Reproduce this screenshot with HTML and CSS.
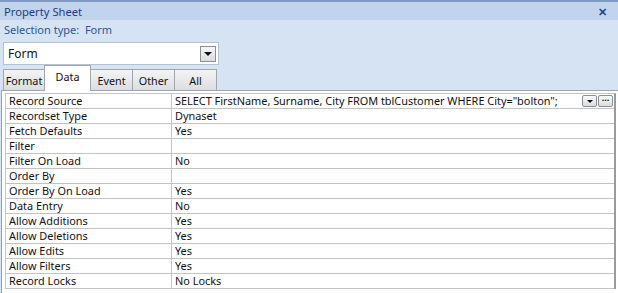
FILE: index.html
```html
<!DOCTYPE html>
<html lang="en">
<head>
    <meta charset="UTF-8">
    <title>Property Sheet</title>
    <link rel="stylesheet" href="styles.css">
</head>
<body>
    <div class="sheet">
        <div class="titlebar">
            <span class="title">Property Sheet</span>
            <span class="close">&#x2715;</span>
        </div>
        <div class="selection">Selection type:&nbsp; Form</div>

        <div class="combo">
            <span class="combo-text">Form</span>
            <span class="combo-btn"><span class="arrow"></span></span>
        </div>

        <!-- tabs -->
        <div class="tabs">
            <div class="tab format">Format</div>
            <div class="tab active">Data</div>
            <div class="tab">Event</div>
            <div class="tab">Other</div>
            <div class="tab">All</div>
        </div>

        <div class="pane">
            <div class="grid">
                <div class="name">Record Source</div>
                <div class="value source">
                    <span>SELECT FirstName, Surname, City FROM tblCustomer WHERE City="bolton";</span>
                    <span class="btns">
                        <span class="mini"><span class="arrow small"></span></span>
                        <span class="mini dots">&middot;&middot;&middot;</span>
                    </span>
                </div>
                <div class="name">Recordset Type</div><div class="value">Dynaset</div>
                <div class="name">Fetch Defaults</div><div class="value">Yes</div>
                <div class="name">Filter</div><div class="value"></div>
                <div class="name">Filter On Load</div><div class="value">No</div>
                <div class="name">Order By</div><div class="value"></div>
                <div class="name">Order By On Load</div><div class="value">Yes</div>
                <div class="name">Data Entry</div><div class="value">No</div>
                <div class="name">Allow Additions</div><div class="value">Yes</div>
                <div class="name">Allow Deletions</div><div class="value">Yes</div>
                <div class="name">Allow Edits</div><div class="value">Yes</div>
                <div class="name">Allow Filters</div><div class="value">Yes</div>
                <div class="name">Record Locks</div><div class="value">No Locks</div>
            </div>
        </div>
    </div>
</body>
</html>
```

FILE: styles.css
```css
body {
    margin: 0;
    font-family: "Noto Sans", "Open Sans", sans-serif;
    font-size: 10.9px;
    background-color: #d6e3f3;
}
.sheet {
    width: 618px;
    height: 293px;
    overflow: hidden;
    display: flex;
    flex-direction: column;
}
.titlebar {
    border-top: 2px solid #8098c2;
    height: 18px;
    background-color: #c1d4ec;
    display: flex;
    align-items: center;
    justify-content: space-between;
    padding: 0 11px 0 4px;
}
.title {
    color: #1f3d78;
    font-size: 11.2px;
}
.close {
    color: #1f4a8a;
    font-size: 11px;
    font-weight: bold;
}
.selection {
    color: #2c5699;
    font-size: 11px;
    padding: 2px 0 0 4px;
    height: 16px;
}
.combo {
    margin: 4px 0 0 3px;
    width: 210px;
    height: 21px;
    background-color: white;
    border: 1px solid #b7c2d1;
    display: flex;
    align-items: center;
    justify-content: space-between;
    padding-left: 4px;
}
.combo-text {
    font-size: 12px;
    color: #111;
}
.combo-btn {
    width: 14px;
    height: 14px;
    margin-right: 2px;
    border: 1px solid #8a8f96;
    background: linear-gradient(#f7f7f7, #d9dbde);
    display: flex;
    align-items: center;
    justify-content: center;
}
.arrow {
    width: 0;
    height: 0;
    border-left: 4px solid transparent;
    border-right: 4px solid transparent;
    border-top: 4px solid #111;
}
.arrow.small {
    border-left-width: 3px;
    border-right-width: 3px;
    border-top-width: 3px;
    margin-top: 4px;
}
.tabs {
    display: flex;
    align-items: flex-end;
    margin: 0 0 0 3px;
    height: 25px;
}
.tab {
    width: 43px;
    height: 21px;
    box-sizing: border-box;
    border: 1px solid #9ea6b0;
    border-bottom: none;
    background: linear-gradient(#f4f4f4, #dcdde0);
    color: #111;
    font-size: 10.8px;
    display: flex;
    align-items: center;
    justify-content: center;
    margin-right: -1px;
}
.tab.format {
    width: 42px;
}
.tab.active {
    position: relative;
    z-index: 1;
    height: 26px;
    width: 47px;
    background: white;
    align-items: flex-start;
    padding-top: 3px;
    margin-bottom: -1px;
}
.pane {
    flex: 1;
    background-color: white;
    border-top: 1px solid #9ea6b0;
    border-left: 1px solid #8ea2c4;
    margin-left: 1px;
    padding: 2px 0 0 3px;
}
.grid {
    width: 608px;
    display: grid;
    grid-template-columns: 166px 1fr;
    border-top: 1px solid #c3c3c3;
    border-left: 1px solid #c3c3c3;
    border-right: 2px solid #9a9a9a;
}
.name, .value {
    height: 14px;
    line-height: 14px;
    border-bottom: 1px solid #c3c3c3;
    padding-left: 3px;
    color: #111;
    white-space: nowrap;
    overflow: hidden;
}
.name {
    border-right: 1px solid #c3c3c3;
}
.source {
    display: flex;
    justify-content: space-between;
}
.btns {
    display: flex;
    gap: 1px;
    padding-top: 1px;
    padding-right: 1px;
}
.mini {
    width: 13px;
    height: 10px;
    border: 1px solid #8a8f96;
    border-radius: 2px;
    background: linear-gradient(#fafafa, #dadcdf);
    display: flex;
    justify-content: center;
    font-size: 9px;
    line-height: 8px;
    font-weight: bold;
}
```
